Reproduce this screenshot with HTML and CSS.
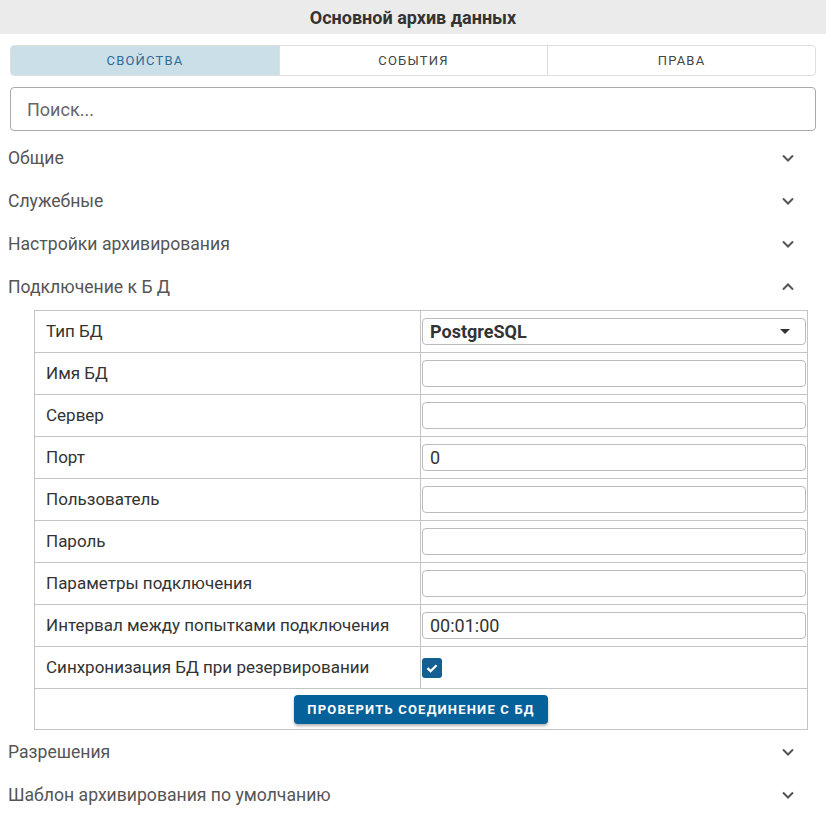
FILE: index.html
```html
<!DOCTYPE html>
<html lang="ru">
<head>
<meta charset="utf-8">
<title>Основной архив данных</title>
<link rel="stylesheet" href="styles.css">
</head>
<body>
<div class="header">Основной архив данных</div>
<div class="content">
  <div class="tabs">
    <div class="tab active">Свойства</div>
    <div class="tab">События</div>
    <div class="tab">Права</div>
  </div>
  <div class="search">Поиск...</div>

  <div class="section"><span>Общие</span><svg class="chev" viewBox="0 0 14 10"><path d="M2 2.5 L7 7.5 L12 2.5"/></svg></div>
  <div class="section"><span>Служебные</span><svg class="chev" viewBox="0 0 14 10"><path d="M2 2.5 L7 7.5 L12 2.5"/></svg></div>
  <div class="section"><span>Настройки архивирования</span><svg class="chev" viewBox="0 0 14 10"><path d="M2 2.5 L7 7.5 L12 2.5"/></svg></div>
  <div class="section"><span>Подключение к Б Д</span><svg class="chev" viewBox="0 0 14 10"><path d="M2 7.5 L7 2.5 L12 7.5"/></svg></div>

  <div class="table">
    <div class="row"><div class="label">Тип БД</div><div class="value"><div class="field select"><span>PostgreSQL</span><span class="caret"></span></div></div></div>
    <div class="row"><div class="label">Имя БД</div><div class="value"><div class="field"></div></div></div>
    <div class="row"><div class="label">Сервер</div><div class="value"><div class="field"></div></div></div>
    <div class="row"><div class="label">Порт</div><div class="value"><div class="field">0</div></div></div>
    <div class="row"><div class="label">Пользователь</div><div class="value"><div class="field"></div></div></div>
    <div class="row"><div class="label">Пароль</div><div class="value"><div class="field"></div></div></div>
    <div class="row"><div class="label">Параметры подключения</div><div class="value"><div class="field"></div></div></div>
    <div class="row"><div class="label">Интервал между попытками подключения</div><div class="value"><div class="field">00:01:00</div></div></div>
    <div class="row"><div class="label">Синхронизация БД при резервировании</div><div class="value"><div class="checkbox"><svg viewBox="0 0 20 20"><path d="M5.5 10.2 L8.6 13.2 L14.5 7.2"/></svg></div></div></div>
    <div class="row btnrow"><div class="button">Проверить соединение с БД</div></div>
  </div>

  <div class="section"><span>Разрешения</span><svg class="chev" viewBox="0 0 14 10"><path d="M2 2.5 L7 7.5 L12 2.5"/></svg></div>
  <div class="section"><span>Шаблон архивирования по умолчанию</span><svg class="chev" viewBox="0 0 14 10"><path d="M2 2.5 L7 7.5 L12 2.5"/></svg></div>
</div>
</body>
</html>
```

FILE: styles.css
```css
html, body {
  margin: 0;
  padding: 0;
  background: #fff;
  font-family: Roboto, "Noto Sans", sans-serif;
  color: #333;
}
.header {
  height: 34px;
  background: #ebebeb;
  display: flex;
  align-items: center;
  justify-content: center;
  font-weight: 700;
  font-size: 18px;
  color: #333;
}
.content {
  padding: 11px 10px 0 8px;
}
.tabs {
  margin-left: 2px;
  height: 31px;
  display: grid;
  grid-template-columns: 1fr 1fr 1fr;
  border: 1px solid #dedede;
  border-radius: 4px;
  overflow: hidden;
  box-sizing: border-box;
}
.tab {
  display: flex;
  align-items: center;
  justify-content: center;
  font-size: 13px;
  letter-spacing: 1.2px;
  text-transform: uppercase;
  color: #444;
  border-left: 1px solid #dedede;
}
.tab:first-child { border-left: none; }
.tab.active {
  background: #cbdfe8;
  color: #2c6d98;
}
.search {
  margin: 11px 0 5px 2px;
  height: 44px;
  box-sizing: border-box;
  border: 1px solid #aaa;
  border-radius: 4px;
  padding-left: 16px;
  display: flex;
  align-items: center;
  font-size: 18px;
  color: #666;
}
.section {
  height: 43px;
  display: flex;
  align-items: center;
  justify-content: space-between;
  font-size: 17.6px;
  color: #555;
}
.chev {
  width: 14px;
  height: 10px;
  margin-right: 21px;
  fill: none;
  stroke: #555;
  stroke-width: 2;
}
.table {
  margin: 2px 8px 0 26px;
  border: 1px solid #c4c4c4;
  border-bottom: none;
}
.row {
  display: grid;
  grid-template-columns: 386px 1fr;
  height: 42px;
  border-bottom: 1px solid #c4c4c4;
  box-sizing: border-box;
}
.label {
  display: flex;
  align-items: center;
  padding-left: 11px;
  padding-bottom: 2px;
  font-size: 17px;
  color: #333;
  border-right: 1px solid #c4c4c4;
}
.value {
  display: flex;
  align-items: center;
  padding: 0 1px 0 1px;
}
.field {
  flex: 1;
  height: 27px;
  box-sizing: border-box;
  border: 1px solid #bbb;
  border-radius: 4px;
  display: flex;
  align-items: center;
  padding-left: 7px;
  font-size: 18px;
  color: #333;
}
.select {
  font-weight: 700;
  justify-content: space-between;
  padding-right: 15px;
}
.caret {
  width: 0;
  height: 0;
  border-left: 5px solid transparent;
  border-right: 5px solid transparent;
  border-top: 5px solid #333;
}
.checkbox {
  width: 20px;
  height: 20px;
  border-radius: 3px;
  background: #135f92;
}
.checkbox svg {
  width: 20px;
  height: 20px;
  display: block;
  fill: none;
  stroke: #fff;
  stroke-width: 2.3;
}
.btnrow {
  display: flex;
  align-items: center;
  justify-content: center;
  height: 41px;
}
.button {
  background: #04619a;
  color: #fff;
  font-weight: 700;
  font-size: 13px;
  letter-spacing: 1.2px;
  text-transform: uppercase;
  height: 29px;
  padding: 0 13px;
  border-radius: 4px;
  display: flex;
  align-items: center;
  box-shadow: 0 2px 3px rgba(0,0,0,0.3);
}
```
